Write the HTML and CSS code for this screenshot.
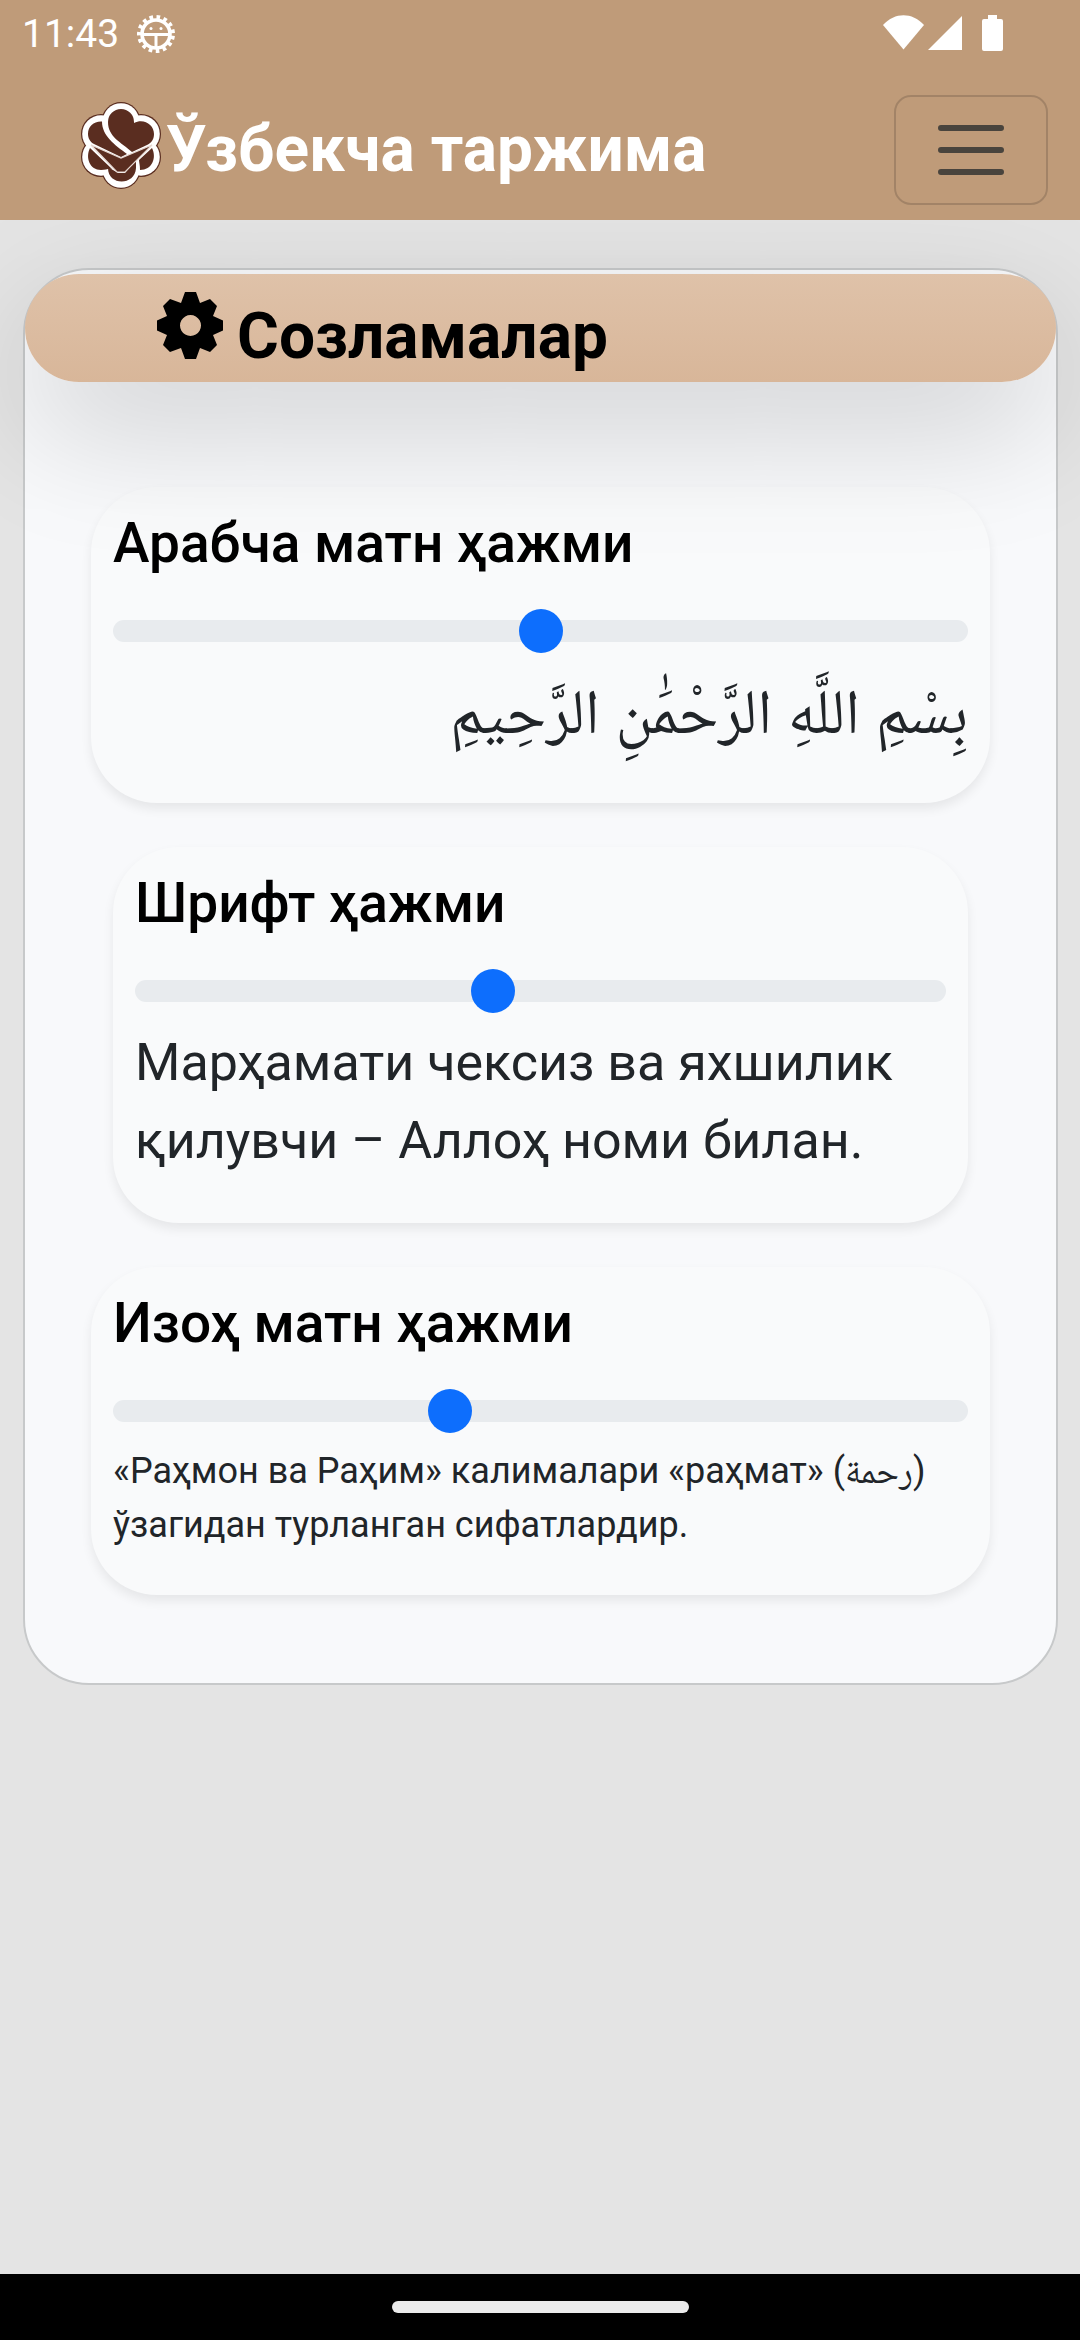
FILE: index.html
```html
<!DOCTYPE html>
<html lang="uz-Cyrl">
<head>
<meta charset="utf-8">
<meta name="viewport" content="width=device-width, initial-scale=1">
<title>Ўзбекча таржима</title>
<link rel="stylesheet" href="styles.css">
</head>
<body class="page">
<header class="top">
  <div class="status">
    <span class="clock">11:43</span>
    <svg class="status-app" viewBox="0 0 38 38" aria-hidden="true">
      <circle cx="19" cy="19" r="14" fill="none" stroke="#fff" stroke-width="3.600"/>
      <circle cx="19" cy="19" r="17" fill="none" stroke="#fff" stroke-width="4" stroke-dasharray="3.6 3.521" stroke-dashoffset="-1.8"/>
      <path d="M6 19.5H32M19 19.5V33" stroke="#fff" stroke-width="3" fill="none"/>
      <circle cx="14" cy="13.500" r="1.500" fill="#fff"/><circle cx="24" cy="13.500" r="1.500" fill="#fff"/>
    </svg>
    <svg class="status-icons" viewBox="0 0 121 38" fill="#fff" aria-hidden="true">
      <path d="M0 10C12-3 29-3 41 10L20.500 34.500Z"/>
      <path d="M79 1V35H45Z"/>
      <path d="M105 0h9v4h4q2 0 2 2v28q0 2-2 2h-17q-2 0-2-2V6q0-2 2-2h4z"/>
    </svg>
  </div>
  <nav class="navbar">
    <a class="brand" href="#">
      <svg class="logo" viewBox="0 0 80 96" aria-hidden="true">
        <g fill="#5a2d20"><circle cx="40" cy="19.500" r="19.500"/><circle cx="20" cy="32" r="20"/><circle cx="60" cy="32" r="20"/><circle cx="20" cy="55" r="20"/><circle cx="60" cy="55" r="20"/><circle cx="40" cy="67.500" r="19.500"/></g>
        <g fill="#fff"><circle cx="40" cy="19.500" r="18.300"/><circle cx="20" cy="32" r="18.800"/><circle cx="60" cy="32" r="18.800"/><circle cx="20" cy="55" r="18.800"/><circle cx="60" cy="55" r="18.800"/><circle cx="40" cy="67.500" r="18.300"/><path d="M20 20H60V68H20Z"/></g>
        <g fill="#5a2d20">
          <path d="M27 20A13 13 0 0 1 53 20V21C63 16 73 23 73 32C73 38 70 41 66 43L51 50C40 40 27 35 27 20Z"/>
          <path d="M7 32C7 24 13 19 21 19.500C21 34 34 43 46 52L40 55L13 42C9 40 7 36 7 32Z"/>
          <path d="M9 46L31 67C27 66 25 68 20 68C9 68 4 56 9 46Z"/>
          <path d="M27 65L37 71H44L55 58V66C54 84 27 84 27 66Z"/>
          <path d="M71 46C76 56 71 68 59 68C59 63 58 60 58 58Z"/>
          <path d="M10 43L40 56L71 43L44 70H36Z" stroke="#e6d8d2" stroke-width="1.200"/>
        </g>
      </svg>
      <span>Ўзбекча таржима</span>
    </a>
    <button class="toggler" type="button" aria-label="Меню">
      <svg class="bars" viewBox="0 0 66 50" aria-hidden="true"><path d="M3 3H63M3 25H63M3 47H63" stroke="#49443d" stroke-width="6" stroke-linecap="round"/></svg>
    </button>
  </nav>
</header>
<main class="content">
  <section class="panel">
    <h1 class="panel-head">
      <svg class="gear" viewBox="0 0 66 67" aria-hidden="true"><path fill-rule="evenodd" d="M28 0H39L43 11 53 7 60 14 56 24 66 28.500V38.500L56 43 60 53 53 60 43 56 39 67H28L24 56 13 60 6 53 10 43 0 38.500V28.500L10 24 6 14 13 7 24 11ZM33.500 23a10.500 10.500 0 1 0 .01 0Z"/></svg>
      <span>Созламалар</span>
    </h1>
    <div class="panel-body">
      <div class="card">
        <label class="card-title" for="arabic-size">Арабча матн ҳажми</label>
        <input class="range" id="arabic-size" type="range" min="0" max="16" value="8">
        <p class="sample arabic" lang="ar" dir="rtl">بِسْمِ اللَّهِ الرَّحْمَٰنِ الرَّحِيمِ</p>
      </div>
      <div class="card card-inset">
        <label class="card-title" for="font-size">Шрифт ҳажми</label>
        <input class="range" id="font-size" type="range" min="0" max="16" value="7">
        <p class="sample translation">Марҳамати чексиз ва яхшилик қилувчи – Аллоҳ номи билан.</p>
      </div>
      <div class="card">
        <label class="card-title" for="note-size">Изоҳ матн ҳажми</label>
        <input class="range" id="note-size" type="range" min="0" max="18" value="7">
        <p class="sample note">«Раҳмон ва Раҳим» калималари «раҳмат» (رحمة) ўзагидан турланган сифатлардир.</p>
      </div>
    </div>
  </section>
</main>
<footer class="gesture-bar"><span class="pill"></span></footer>
</body>
</html>
```
FILE: styles.css
```css
* { box-sizing: border-box; }

.page {
  margin: 0;
  min-height: 100vh;
  display: flex;
  flex-direction: column;
  background: #e4e4e4;
  color: #212529;
  font-family: Roboto, "Noto Naskh Arabic", "Noto Sans Arabic", "DejaVu Sans", sans-serif;
}

.top {
  position: relative;
  z-index: 2;
  background: #bf9b79;
  color: #fff;
}

.status {
  display: flex;
  align-items: center;
  height: 80px;
  padding: 0 76px 12px 22px;
}
.clock { font-size: 39px; line-height: 46px; }
.status-app { width: 38px; height: 38px; margin-left: 18px; }
.status-icons { width: 121px; height: 38px; margin-left: auto; }

.navbar {
  display: flex;
  align-items: center;
  justify-content: space-between;
  padding: 15px 32px 15px 81px;
}
.brand {
  display: flex;
  align-items: center;
  gap: 5px;
  color: #fff;
  font-size: 64px;
  font-weight: 700;
  line-height: 96px;
  text-decoration: none;
}
.logo { width: 80px; height: 96px; }
.toggler {
  display: grid;
  place-items: center;
  width: 154px;
  height: 110px;
  padding: 0;
  border: 2px solid rgba(0, 0, 0, .15);
  border-radius: 17px;
  background: transparent;
}
.bars { width: 66px; height: 50px; }

.content {
  flex: 1;
  padding: 48px 22px 44px 23px;
}

.panel {
  border: 2px solid #c7c9ca;
  border-radius: 66px;
  background: #f8f9fb;
  padding-top: 4px;
}
.panel-head {
  position: relative;
  display: flex;
  gap: 14px;
  height: 108px;
  margin: 0;
  padding: 18px 132px 0;
  border-radius: 54px;
  background: linear-gradient(#dfc2a9, #d8b699);
  box-shadow: 0 44px 132px rgba(0, 0, 0, .175);
  color: #000;
  font-size: 64px;
  font-weight: 700;
  line-height: 90px;
}
.gear { width: 66px; height: 67px; }

.panel-body {
  display: flex;
  flex-direction: column;
  gap: 44px;
  padding: 105px 66px 88px;
}

.card {
  display: flex;
  flex-direction: column;
  padding: 23px 22px 43px;
  border-radius: 66px;
  background: #f9fafb;
  box-shadow: 0 6px 11px rgba(0, 0, 0, .075);
}
.card-inset { margin: 0 22px; }
.card-title {
  margin-bottom: 22px;
  color: #000;
  font-size: 55px;
  font-weight: 500;
  line-height: 66px;
}

.range {
  appearance: none;
  width: 100%;
  height: 66px;
  margin: 0;
  background: transparent;
}
.range::-webkit-slider-runnable-track {
  height: 22px;
  border-radius: 11px;
  background: #e8ebee;
}
.range::-webkit-slider-thumb {
  appearance: none;
  width: 44px;
  height: 44px;
  margin-top: -11px;
  border-radius: 50%;
  background: #0d6efd;
}

.sample { margin: 0; }
.arabic { font-size: 63px; line-height: 96px; }
.translation { font-size: 52px; line-height: 78px; }
.note { font-size: 36px; line-height: 54px; }

.gesture-bar {
  display: flex;
  align-items: center;
  justify-content: center;
  height: 66px;
  background: #000;
}
.pill {
  width: 297px;
  height: 12px;
  border-radius: 6px;
  background: #ebebeb;
}
```
